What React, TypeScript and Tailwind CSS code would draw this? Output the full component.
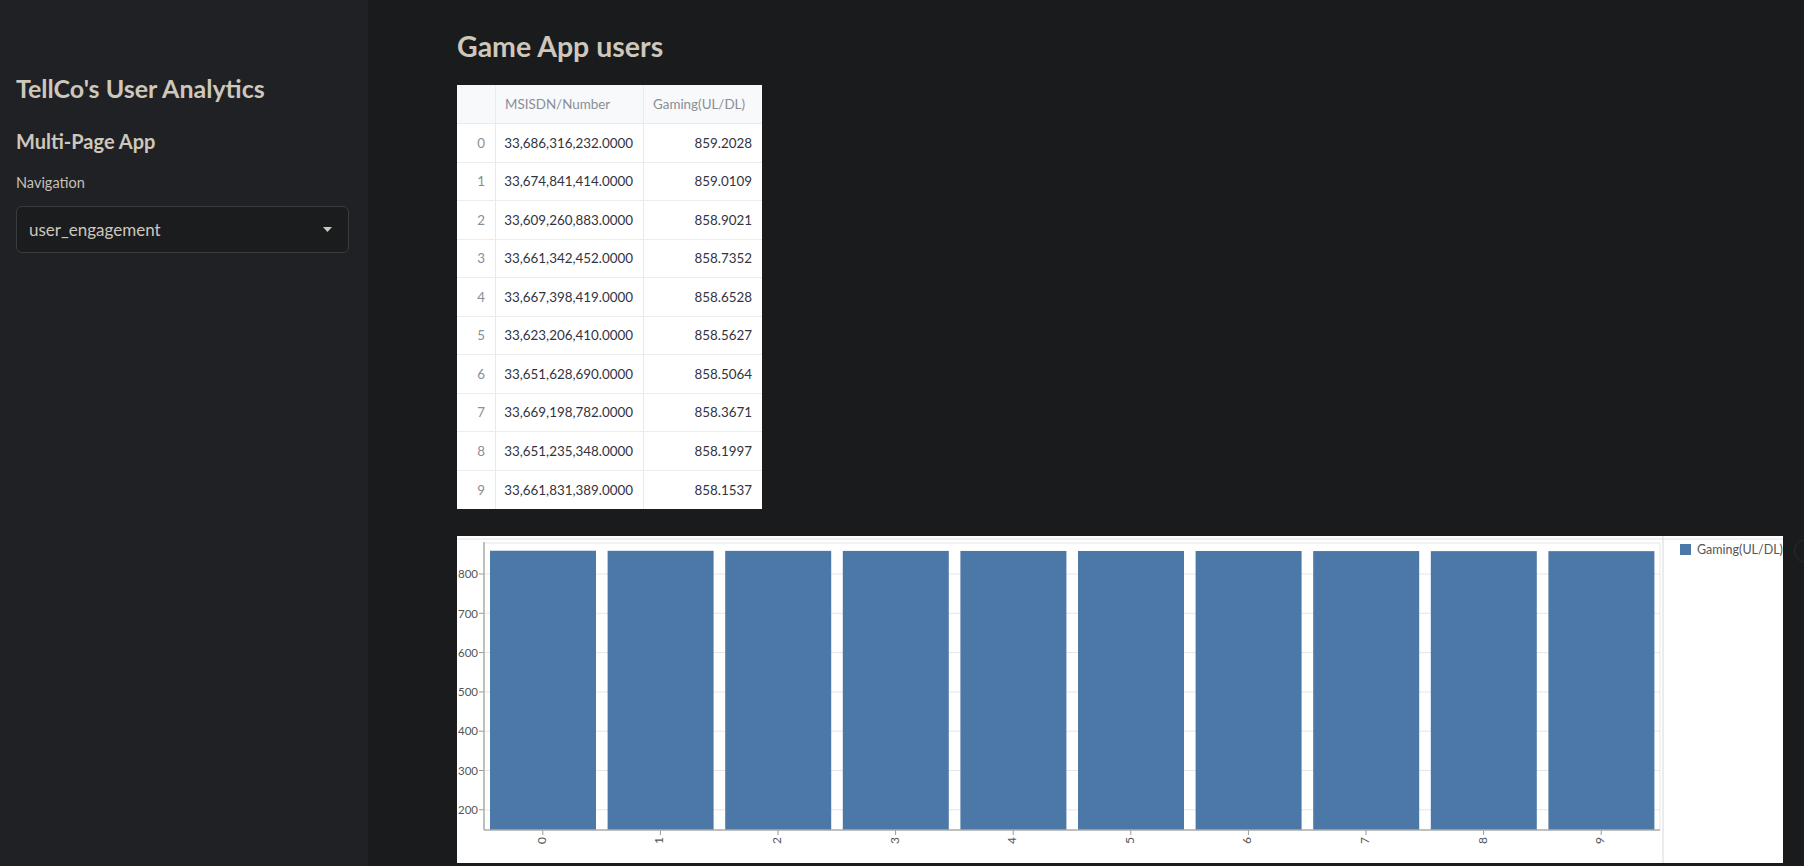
const rows = [
  ['33,686,316,232.0000', '859.2028'],
  ['33,674,841,414.0000', '859.0109'],
  ['33,609,260,883.0000', '858.9021'],
  ['33,661,342,452.0000', '858.7352'],
  ['33,667,398,419.0000', '858.6528'],
  ['33,623,206,410.0000', '858.5627'],
  ['33,651,628,690.0000', '858.5064'],
  ['33,669,198,782.0000', '858.3671'],
  ['33,651,235,348.0000', '858.1997'],
  ['33,661,831,389.0000', '858.1537'],
]

const values = [859.2028, 859.0109, 858.9021, 858.7352, 858.6528, 858.5627, 858.5064, 858.3671, 858.1997, 858.1537]

// plot geometry, in px relative to the chart box
const PX0 = 27
const PX1 = 1203
const PY0 = 7
const PY1 = 294
const band = (PX1 - PX0) / 10
const yOf = (v: number) => 38 + ((800 - v) / 100) * 39.3

const Sidebar = () => (
  <aside className="w-[368px] shrink-0 bg-[#202124] px-4 pt-[73px]">
    <div className="text-[25px] font-bold leading-[30px] text-[#cdc7bc]">TellCo's User Analytics</div>
    <div className="mt-[26px] text-[20px] font-bold leading-[24px] text-[#cdc7bc]">Multi-Page App</div>
    <div className="mt-[21px] text-[14.5px] leading-[18px] text-[#c5c0b6]">Navigation</div>
    <div className="mt-[14px] flex h-[47px] w-[333px] items-center justify-between rounded-md border border-[#3a3b3f] bg-[#1b1c1e] pl-3 pr-4">
      <span className="text-[17px] text-[#cdc7bc]">user_engagement</span>
      <svg width="9" height="5" viewBox="0 0 9 5">
        <path d="M0 0h9L4.5 5z" fill="#cfc9bd" />
      </svg>
    </div>
  </aside>
)

const DataTable = () => (
  <div className="w-[305px] bg-white text-[13.4px]">
    <div className="flex h-[39px] border-b border-[#e8eaee] bg-[#f8f9fb] text-[#8b8d95]">
      <div className="w-[39px] border-r border-[#e8eaee]" />
      <div className="flex w-[148px] items-center border-r border-[#e8eaee] pl-[9px]">MSISDN/Number</div>
      <div className="flex w-[118px] items-center pl-[9px]">Gaming(UL/DL)</div>
    </div>
    {rows.map((r, i) => (
      <div key={i} className={`flex h-[38.5px] ${i < rows.length - 1 ? 'border-b border-[#ededf0]' : ''}`}>
        <div className="flex w-[39px] items-center justify-end border-r border-[#e8eaee] pr-[10px] text-[#8b8d95]">{i}</div>
        <div className="flex w-[148px] items-center justify-end border-r border-[#e8eaee] pr-[10px] text-[#31333f]">{r[0]}</div>
        <div className="flex w-[118px] items-center justify-end pr-[10px] text-[#31333f]">{r[1]}</div>
      </div>
    ))}
  </div>
)

const BarChart = () => {
  const ticks = [800, 700, 600, 500, 400, 300, 200]
  return (
    <div className="relative mt-[27px] w-[1326px]">
      <svg width="1326" height="327" className="block bg-white" style={{ fontFamily: 'Lato, sans-serif' }}>
        <line x1="0" y1="3" x2="1326" y2="3" stroke="#e2e2e2" />
        <line x1="1206" y1="0" x2="1206" y2="327" stroke="#d8d8d8" />
        <line x1={PX0} y1={PY0} x2={PX1} y2={PY0} stroke="#e6e6e6" />
        <line x1={PX1} y1={PY0} x2={PX1} y2={PY1} stroke="#e6e6e6" />
        {ticks.map((t) => (
          <g key={t}>
            <line x1={PX0} y1={yOf(t)} x2={PX1} y2={yOf(t)} stroke="#e6e6e6" />
            <line x1={PX0 - 5} y1={yOf(t)} x2={PX0} y2={yOf(t)} stroke="#999" />
            <text x={PX0 - 6} y={yOf(t)} dy="4.2" textAnchor="end" fontSize="11.5" fill="#555">
              {t}
            </text>
          </g>
        ))}
        {values.map((v, i) => {
          const x = PX0 + i * band
          return (
            <g key={i}>
              <rect x={x + 6} y={yOf(v)} width={band - 11.6} height={PY1 - yOf(v)} fill="#4c78a8" />
              <line x1={x + band / 2} y1={PY1} x2={x + band / 2} y2={PY1 + 5} stroke="#999" />
              <text
                x={x + band / 2}
                y={PY1 + 7}
                textAnchor="end"
                dominantBaseline="middle"
                fontSize="12"
                fill="#555"
                transform={`rotate(-90 ${x + band / 2} ${PY1 + 7})`}
              >
                {i}
              </text>
            </g>
          )
        })}
        <line x1={PX0} y1={PY0 - 1} x2={PX0} y2={PY1} stroke="#aaa" strokeWidth="1.5" />
        <line x1={PX0} y1={PY1} x2={PX1} y2={PY1} stroke="#aaa" strokeWidth="1.5" />
        <rect x="1223" y="8" width="11" height="11" fill="#4c78a8" />
        <text x="1240" y="18" fontSize="12.5" fill="#555">
          Gaming(UL/DL)
        </text>
      </svg>
      <div className="absolute left-[1337px] top-[3px] flex h-[24px] w-[24px] items-center justify-center rounded-full border border-[#2c2d31]">
        <div className="h-[3px] w-[3px] rounded-full bg-[#4a4b50]" />
      </div>
    </div>
  )
}

export default function App() {
  return (
    <div className="flex h-[866px] overflow-hidden bg-[#1a1b1d]" style={{ fontFamily: 'Lato, "Noto Sans", sans-serif' }}>
      <Sidebar />
      <main className="flex-1 pl-[89px] pt-[29px]">
        <h1 className="text-[28.5px] font-bold leading-[34px] text-[#cdc7bc]">Game App users</h1>
        <div className="mt-[22px]">
          <DataTable />
        </div>
        <BarChart />
      </main>
    </div>
  )
}
